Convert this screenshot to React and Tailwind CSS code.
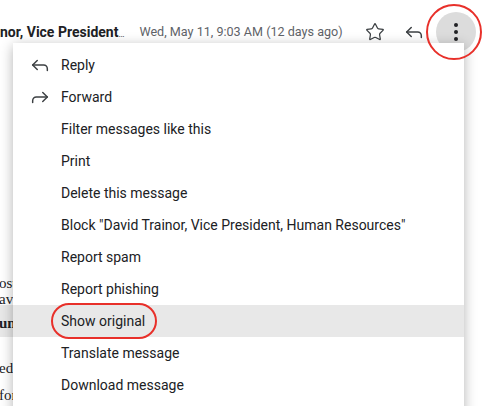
import React from 'react';
import { Star, Reply, Forward } from 'lucide-react';

const items = [
  { label: 'Reply', icon: 'reply' },
  { label: 'Forward', icon: 'forward' },
  { label: 'Filter messages like this' },
  { label: 'Print' },
  { label: 'Delete this message' },
  { label: 'Block "David Trainor, Vice President, Human Resources"' },
  { label: 'Report spam' },
  { label: 'Report phishing' },
  { label: 'Show original', active: true },
  { label: 'Translate message' },
  { label: 'Download message' },
];

const MenuItem = ({ label, icon, active }) => (
  <div className={`flex items-center h-[32px] pl-[16px] ${active ? 'bg-[#e8e8e8]' : ''}`}>
    <div className="w-[32px] flex items-center">
      {icon === 'reply' && <Reply size={22} strokeWidth={1.6} className="text-[#3c4043]" />}
      {icon === 'forward' && <Forward size={22} strokeWidth={1.6} className="text-[#3c4043]" />}
    </div>
    <span className="text-[14px] text-[#202124] whitespace-nowrap">{label}</span>
  </div>
);

export default function App() {
  return (
    <div
      className="relative w-[486px] h-[406px] overflow-hidden bg-white"
      style={{ fontFamily: 'Roboto, "Liberation Sans", sans-serif' }}
    >
      {/* message header */}
      <div className="flex items-center h-[64px] whitespace-nowrap">
        <span className="text-[14px] font-bold text-[#202124]">
          nor, Vice President<span className="text-[9px] font-normal">…</span>
        </span>
        <span className="ml-[15px] text-[12.6px] text-[#5f6368]">Wed, May 11, 9:03 AM (12 days ago)</span>
        <Star size={20} strokeWidth={1.5} className="ml-[22px] text-[#3c4043]" />
        <Reply size={22} strokeWidth={1.6} className="ml-[18px] text-[#3c4043]" />
        <div className="ml-[11px] w-[40px] h-[40px] rounded-full bg-[#dcdcdc] flex flex-col items-center justify-center gap-[3px]">
          <span className="w-[4px] h-[4px] rounded-full bg-[#202124]" />
          <span className="w-[4px] h-[4px] rounded-full bg-[#202124]" />
          <span className="w-[4px] h-[4px] rounded-full bg-[#202124]" />
        </div>
      </div>

      {/* message body peeking out behind the menu */}
      <div
        className="w-[13px] overflow-hidden text-[15px] leading-[16px] text-[#202124] whitespace-nowrap"
        style={{ fontFamily: '"Liberation Serif", serif' }}
      >
        <div className="mt-[211px] h-[16px] ml-[-1px]">ost</div>
        <div className="h-[14px] ml-[-1px]">ave</div>
        <div className="h-[32px] bg-[#e8e8e8] pt-[10px]">
          <div className="ml-[-1px] font-bold">um</div>
        </div>
        <div className="mt-[23px] h-[16px] ml-[-1px]">ed</div>
        <div className="mt-[11px] h-[16px] ml-[-1px]">for</div>
      </div>

      {/* dropdown menu */}
      <div className="absolute left-[13px] top-[43px] w-[451px] h-[400px] bg-white pt-[6px] shadow-[0_3px_12px_rgba(0,0,0,0.3)]">
        {items.map((it) => (
          <MenuItem key={it.label} {...it} />
        ))}
      </div>

      {/* red annotations */}
      <div className="absolute left-[426px] top-[4px] w-[56px] h-[56px] rounded-full border-[2.5px] border-[#e8302a]" />
      <div className="absolute left-[51px] top-[303px] w-[106px] h-[36px] rounded-full border-[2.5px] border-[#e8302a]" />
    </div>
  );
}
